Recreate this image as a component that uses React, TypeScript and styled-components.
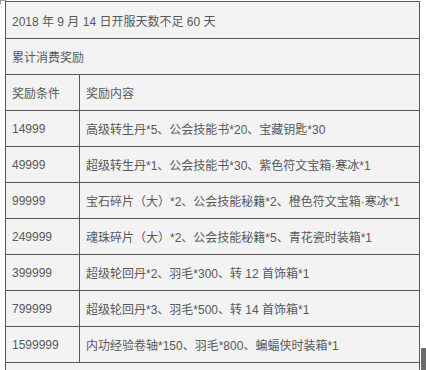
import styled, { createGlobalStyle } from "styled-components";

const GlobalStyle = createGlobalStyle`
    body {
        margin: 0;
        background: #ffffff;
        font-family: "Liberation Sans", "Noto Sans CJK SC", sans-serif;
    }
`;

const Page = styled.div`
    position: relative;
    width: 426px;
    height: 370px;
    padding: 1px 0 0 5px;
    box-sizing: border-box;
    overflow: hidden;
`;

const Table = styled.table`
    width: 415px;
    table-layout: fixed;
    border-collapse: collapse;
    background: #f3f3f3;
    color: #595959;
    font-size: 12px;
`;

const Col = styled.col<{ $w?: number }>`
    width: ${(p) => (p.$w ? `${p.$w}px` : "auto")};
`;

const Cell = styled.td<{ $tall?: boolean }>`
    height: ${(p) => (p.$tall ? 37 : 36)}px;
    padding: 0 0 0 6px;
    border: 1px solid #585858;
    box-sizing: border-box;
    white-space: nowrap;
`;

const Corner = styled.div`
    position: absolute;
    left: 0;
    top: 0;
    width: 5px;
    height: 3px;
    border-top: 1px solid #9a9a9a;
    border-left: 1px solid #9a9a9a;
`;

const FloatBtn = styled.div`
    position: absolute;
    left: 421px;
    top: 348px;
    width: 12px;
    height: 24px;
    background: #6c6c6c;
`;

const rows = [
    ["14999", "高级转生丹*5、公会技能书*20、宝藏钥匙*30"],
    ["49999", "超级转生丹*1、公会技能书*30、紫色符文宝箱·寒冰*1"],
    ["99999", "宝石碎片（大）*2、公会技能秘籍*2、橙色符文宝箱·寒冰*1"],
    ["249999", "魂珠碎片（大）*2、公会技能秘籍*5、青花瓷时装箱*1"],
    ["399999", "超级轮回丹*2、羽毛*300、转 12 首饰箱*1"],
    ["799999", "超级轮回丹*3、羽毛*500、转 14 首饰箱*1"],
    ["1599999", "内功经验卷轴*150、羽毛*800、蝙蝠侠时装箱*1"],
];

function App() {
    return <Page>
        <GlobalStyle />
        <Corner />
        <Table>
            <colgroup>
                <Col $w={74} />
                <Col />
            </colgroup>
            <tbody>
                <tr><Cell colSpan={2} $tall>2018 年 9 月 14 日开服天数不足 60 天</Cell></tr>
                <tr><Cell colSpan={2}>累计消费奖励</Cell></tr>
                <tr>
                    <Cell>奖励条件</Cell>
                    <Cell>奖励内容</Cell>
                </tr>
                {rows.map(([need, reward]) =>
                    <tr key={need}>
                        <Cell>{need}</Cell>
                        <Cell>{reward}</Cell>
                    </tr>)}
                <tr><Cell colSpan={2}></Cell></tr>
            </tbody>
        </Table>
        <FloatBtn />
    </Page>
}

export default App;
